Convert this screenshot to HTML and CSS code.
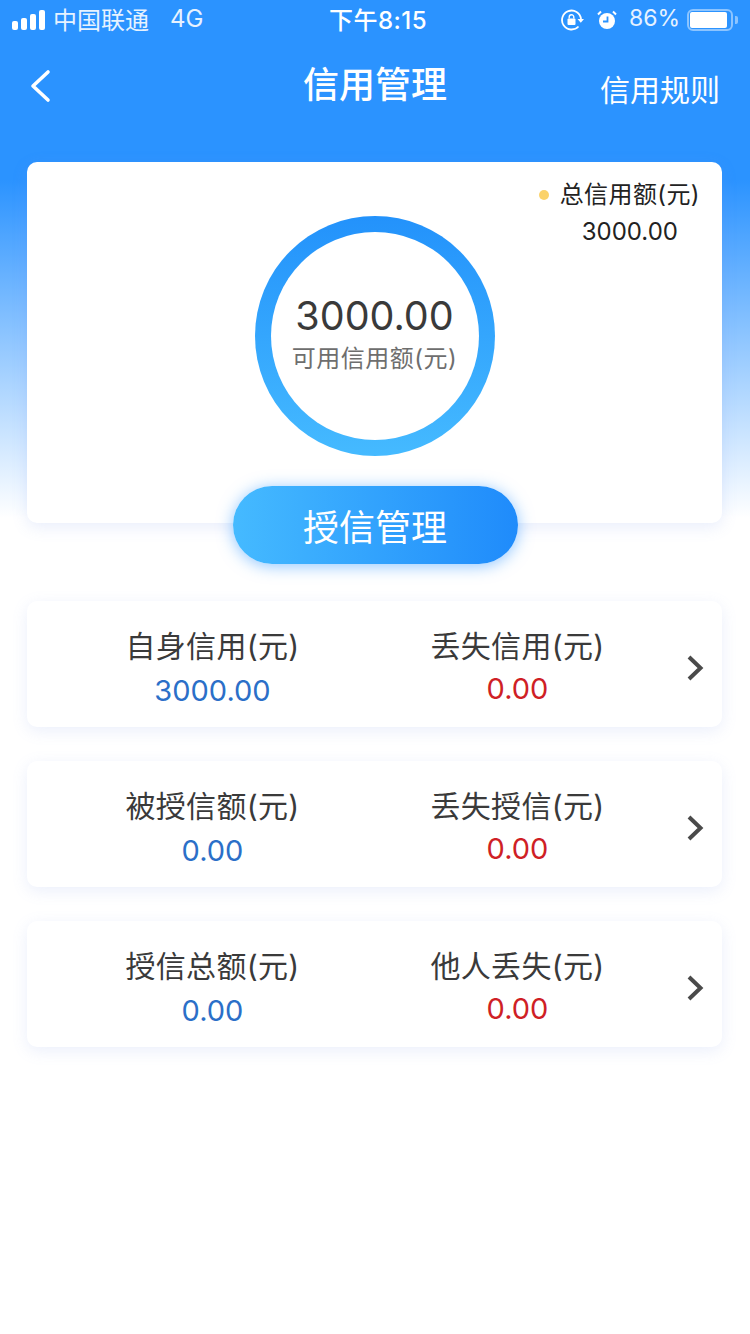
FILE: index.html
```html
<!DOCTYPE html>
<html lang="zh-CN">

<head>
    <meta charset="UTF-8">
    <meta name="viewport" content="width=device-width, initial-scale=1.0">
    <title>信用管理</title>
    <link rel="stylesheet" href="styles.css">
</head>

<body>
    <div class="hero">
        <div class="status-bar">
            <div class="status-left">
                <svg class="signal" width="33" height="20" viewBox="0 0 33 20">
                    <rect x="0" y="11" width="6" height="9" rx="2" fill="#fff" />
                    <rect x="9" y="8" width="6" height="12" rx="2" fill="#fff" />
                    <rect x="18" y="4" width="6" height="16" rx="2" fill="#fff" />
                    <rect x="27" y="0" width="6" height="20" rx="2" fill="#fff" />
                </svg>
                <span class="carrier">中国联通</span>
                <span class="network">4G</span>
            </div>
            <div class="status-time">下午8:15</div>
            <div class="status-right">
                <svg class="lock-icon" width="24" height="22" viewBox="0 0 24 22">
                    <path d="M17.5 17.500A9.500 9.500 0 1 1 20 10" fill="none" stroke="#fff" stroke-width="1.800" />
                    <path d="M16.500 10h6.500l-3.200 3.800z" fill="#fff" />
                    <rect x="6.500" y="9.500" width="8" height="6.500" rx="1" fill="#fff" />
                    <path d="M8.200 9.500V8a2.300 2.300 0 0 1 4.600 0v1.500" fill="none" stroke="#fff" stroke-width="1.400" />
                </svg>
                <svg class="alarm-icon" width="20" height="20" viewBox="0 0 20 20">
                    <circle cx="10" cy="11" r="8" fill="#fff" />
                    <path d="M10.500 6.500v5H6" fill="none" stroke="#2b93ff" stroke-width="1.800" />
                    <path d="M1 4.500 4 1.500M19 4.500 16 1.500" fill="none" stroke="#fff" stroke-width="2" />
                </svg>
                <span class="percent">86%</span>
                <div class="battery">
                    <div class="battery-level"></div>
                </div>
                <div class="battery-tip"></div>
            </div>
        </div>
        <div class="nav-bar">
            <svg class="back-icon" width="24" height="34" viewBox="0 0 24 34">
                <path d="M20 3 5 17l15 14" fill="none" stroke="#fff" stroke-width="3.600" stroke-linecap="round" stroke-linejoin="round" />
            </svg>
            <h1 class="nav-title">信用管理</h1>
            <a class="nav-link">信用规则</a>
        </div>
        <div class="summary-card">
            <div class="legend">
                <div class="legend-title"><span class="legend-dot"></span>总信用额(元)</div>
                <div class="legend-value">3000.00</div>
            </div>
            <div class="ring">
                <div class="ring-inner">
                    <div class="ring-value">3000.00</div>
                    <div class="ring-label">可用信用额(元)</div>
                </div>
            </div>
        </div>
        <button class="grant-button">授信管理</button>
    </div>

    <div class="rows">
        <div class="row">
            <div class="cell">
                <div class="cell-label">自身信用(元)</div>
                <div class="cell-value blue">3000.00</div>
            </div>
            <div class="cell">
                <div class="cell-label">丢失信用(元)</div>
                <div class="cell-value red">0.00</div>
            </div>
            <svg class="chevron" width="20" height="28" viewBox="0 0 20 28">
                <path d="M3 3 14.500 14 3 25" fill="none" stroke="#4a4a4a" stroke-width="4" />
            </svg>
        </div>
        <div class="row">
            <div class="cell">
                <div class="cell-label">被授信额(元)</div>
                <div class="cell-value blue">0.00</div>
            </div>
            <div class="cell">
                <div class="cell-label">丢失授信(元)</div>
                <div class="cell-value red">0.00</div>
            </div>
            <svg class="chevron" width="20" height="28" viewBox="0 0 20 28">
                <path d="M3 3 14.500 14 3 25" fill="none" stroke="#4a4a4a" stroke-width="4" />
            </svg>
        </div>
        <div class="row">
            <div class="cell">
                <div class="cell-label">授信总额(元)</div>
                <div class="cell-value blue">0.00</div>
            </div>
            <div class="cell">
                <div class="cell-label">他人丢失(元)</div>
                <div class="cell-value red">0.00</div>
            </div>
            <svg class="chevron" width="20" height="28" viewBox="0 0 20 28">
                <path d="M3 3 14.500 14 3 25" fill="none" stroke="#4a4a4a" stroke-width="4" />
            </svg>
        </div>
    </div>
</body>

</html>
```

FILE: styles.css
```css
* {
    box-sizing: border-box;
}

body {
    margin: 0;
    width: 750px;
    height: 1334px;
    overflow: hidden;
    background: #fff;
    font-family: "Inter", "Noto Sans CJK SC", sans-serif;
    color: #333;
}

.hero {
    height: 565px;
    display: flex;
    flex-direction: column;
    align-items: center;
    background: linear-gradient(180deg, #2b93ff 0, #2b93ff 180px, #fff 518px);
}

.status-bar {
    width: 100%;
    height: 40px;
    padding: 0 12px;
    display: grid;
    grid-template-columns: 1fr auto 1fr;
    align-items: center;
    color: #fff;
    font-size: 24px;
}

.status-left,
.status-right {
    display: flex;
    align-items: center;
}

.status-right {
    justify-content: flex-end;
}

.signal {
    margin-right: 8px;
}

.carrier,
.network,
.percent,
.status-time {
    margin-bottom: 4px;
}

.carrier {
    color: #e6f2ff;
}

.network {
    margin-left: 21px;
    color: #e6f2ff;
}

.status-time {
    margin-left: 6px;
    font-weight: 500;
    letter-spacing: 0.5px;
}

.lock-icon {
    margin-right: 12px;
}

.alarm-icon {
    margin-right: 12px;
}

.percent {
    margin-right: 7px;
    font-size: 23px;
    color: #e6f2ff;
}

.battery {
    width: 46px;
    height: 22px;
    padding: 1px;
    border: 2px solid #8cc4ff;
    border-radius: 6px;
}

.battery-level {
    width: 37px;
    height: 100%;
    background: #fff;
    border-radius: 2px;
}

.battery-tip {
    width: 3px;
    height: 8px;
    margin-left: 2px;
    background: #8cc4ff;
    border-radius: 0 2px 2px 0;
}

.nav-bar {
    width: 100%;
    height: 90px;
    padding: 0 30px;
    display: grid;
    grid-template-columns: 1fr auto 1fr;
    align-items: center;
    color: #fff;
}

.back-icon {
    margin: 2px 0 0 -2px;
}

.nav-title {
    margin: 0;
    font-size: 36px;
    font-weight: 500;
    line-height: 50px;
}

.nav-link {
    justify-self: end;
    font-size: 30px;
    margin-top: 6px;
}

.summary-card {
    align-self: flex-start;
    width: 695px;
    height: 361px;
    margin: 32px 0 0 27px;
    background: #fff;
    border-radius: 10px;
    box-shadow: 0 4px 16px rgba(110, 140, 230, 0.16);
    display: flex;
    justify-content: center;
    padding-top: 54px;
    position: relative;
}

.legend {
    position: absolute;
    top: 16px;
    right: 22px;
    color: #222;
    font-size: 24px;
    letter-spacing: 0.400px;
}

.legend-title {
    display: flex;
    align-items: center;
    line-height: 34px;
}

.legend-dot {
    width: 10px;
    height: 10px;
    margin-right: 11px;
    border-radius: 50%;
    background: #fbd26a;
}

.legend-value {
    margin-top: 3px;
    padding-left: 43px;
    line-height: 34px;
    letter-spacing: 0;
}

.ring {
    width: 240px;
    height: 240px;
    padding: 16px;
    border-radius: 50%;
    background: linear-gradient(180deg, #2392fb, #45baff);
}

.ring-inner {
    width: 100%;
    height: 100%;
    padding-bottom: 6px;
    border-radius: 50%;
    background: #fff;
    display: flex;
    flex-direction: column;
    align-items: center;
    justify-content: center;
}

.ring-value {
    font-size: 39.500px;
    line-height: 52px;
    color: #3a3a3a;
}

.ring-label {
    font-size: 24px;
    line-height: 34px;
    letter-spacing: 0.500px;
    color: #6e6e6e;
}

.grant-button {
    width: 285px;
    height: 78px;
    margin-top: -37px;
    position: relative;
    border: 0;
    border-radius: 39px;
    background: linear-gradient(90deg, #45baff, #1f8bfb);
    box-shadow: 0 2px 16px rgba(50, 150, 255, 0.55);
    color: #fff;
    font-family: inherit;
    font-size: 36px;
}

.rows {
    margin: 36px 28px 0 27px;
    display: flex;
    flex-direction: column;
    gap: 34px;
}

.row {
    height: 126px;
    display: flex;
    align-items: flex-start;
    padding: 24px 0 0 33px;
    background: #fff;
    border-radius: 10px;
    box-shadow: 0 4px 16px rgba(110, 140, 230, 0.14);
}

.cell {
    width: 305px;
    text-align: center;
}

.cell-label {
    font-size: 30px;
    line-height: 42px;
    letter-spacing: 0.300px;
    color: #3a3a3a;
}

.cell-value {
    font-size: 29px;
    line-height: 40px;
}

.blue {
    margin-top: 4px;
    color: #2b6fc8;
}

.red {
    margin-top: 2px;
    color: #cf1f26;
}

.chevron {
    margin: 29px 0 0 16px;
}
```
